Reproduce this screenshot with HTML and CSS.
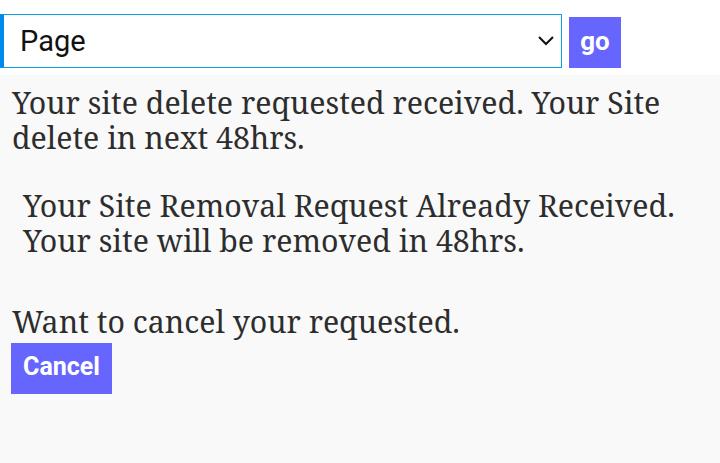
FILE: index.html
```html
<!DOCTYPE html>
<html lang="en">
<head>
  <meta charset="UTF-8" />
  <meta name="viewport" content="width=device-width, initial-scale=1.0" />
  <title>Site Removal</title>
  <link rel="stylesheet" href="styles.css">
</head>
<body>
<!-- page switcher -->
<form class="bar">
  <select class="pick">
    <option>Page</option>
  </select>
  <button class="btn go">go</button>
</form>

<!-- removal status -->
<main class="content">
  <p class="msg">Your site delete requested received. Your Site delete in next 48hrs.</p>
  <p class="msg notice">Your Site Removal Request Already Received. Your site will be removed in 48hrs.</p>
  <p class="msg ask">Want to cancel your requested.</p>
  <button class="btn cancel">Cancel</button>
</main>
</body>
</html>
```

FILE: styles.css
```css
:root { --accent:#6666ff; --line:#0aa0e8; --bg:#f9f9f9; }
*{box-sizing:border-box}
html,body{height:100%}
body{margin:0;background:#fff;color:#2d2d2d;display:flex;flex-direction:column}
.bar{display:flex;align-items:flex-start;height:75px;padding-top:14px;margin:0;background:#fff}
.pick{width:562px;height:54px;border:1px solid var(--line);border-left:4px solid #0088ee;border-radius:0;background:#fff;
  font-family:Roboto,sans-serif;font-size:29px;color:#111;padding:0 16px;appearance:none;
  background-image:url("data:image/svg+xml,%3Csvg xmlns='http://www.w3.org/2000/svg' width='16' height='10'%3E%3Cpath d='M1 1l7 7 7-7' fill='none' stroke='%23111' stroke-width='2'/%3E%3C/svg%3E");
  background-repeat:no-repeat;background-position:right 7px center}
.btn{border:none;border-radius:0;background:var(--accent);color:#fff;font-family:Roboto,sans-serif;font-weight:700;cursor:pointer;padding:0}
.go{width:52px;height:51px;margin:3px 0 0 7px;font-size:26px;padding-bottom:4px}
.content{flex:1;background:var(--bg);padding:11px 12px}
.msg{margin:0;font-family:"Noto Serif","DejaVu Serif",serif;font-size:30.3px;line-height:34.5px}
.notice{margin-top:34px;padding-left:11px}
.ask{margin-top:47px}
.cancel{display:block;width:101px;height:51px;font-size:25px;margin-top:3px;margin-left:-1px;padding-bottom:3px}
```
